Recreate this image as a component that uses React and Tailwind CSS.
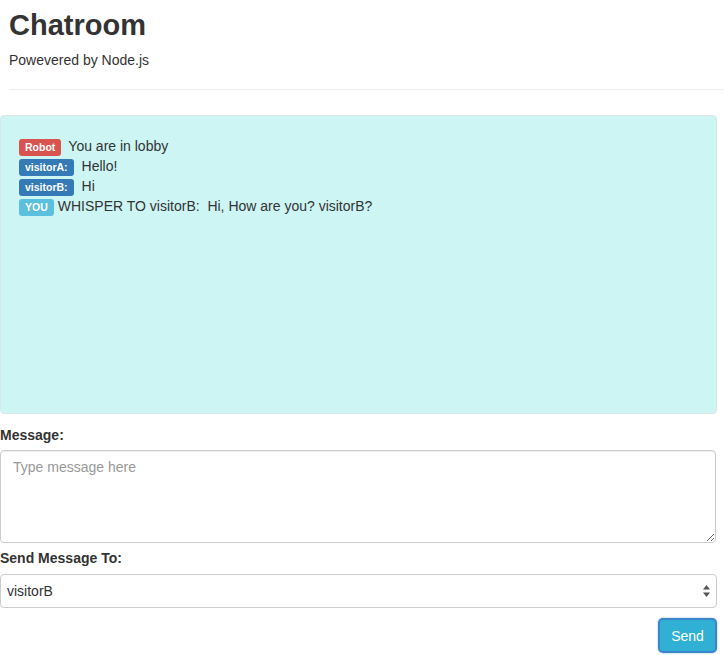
import React from 'react';

const labelColors = {
    danger: 'bg-[#d9534f]',
    primary: 'bg-[#337ab7]',
    info: 'bg-[#5bc0de]',
};

const messages = [
    { from: 'Robot', tone: 'danger', gap: 'ml-[7px]', text: 'You are in lobby' },
    { from: 'visitorA:', tone: 'primary', gap: 'ml-[8px]', text: 'Hello!' },
    { from: 'visitorB:', tone: 'primary', gap: 'ml-[8px]', text: 'Hi' },
    { from: 'YOU', tone: 'info', gap: 'ml-[4px]', text: 'WHISPER TO visitorB:\u00a0 Hi, How are you? visitorB?' },
];

const ChatLine = ({ msg }) => (
    <div className="leading-[20px]">
        <span className={`${labelColors[msg.tone]} text-white font-bold text-[10.5px] leading-none rounded-[3px] pt-[2px] pb-[3px] px-[6px]`}>
            {msg.from}
        </span>
        <span className={msg.gap}>{msg.text}</span>
    </div>
);

export default function App() {
    return (
        <div
            className="w-[724px] min-h-[655px] bg-white text-[#333] text-[14px] leading-[20px]"
            style={{ fontFamily: '"Liberation Sans", Arial, sans-serif' }}
        >
            {/* header */}
            <div className="pl-[9px]">
                <h1 className="pt-[7px] text-[29px] leading-[36px] font-bold">Chatroom</h1>
                <p className="mt-[7px]">Powevered by Node.js</p>
                <hr className="mt-[19px] border-0 border-t border-[#eee]" />
            </div>

            {/* chat log */}
            <div className="mt-[25px] w-[717px] h-[299px] rounded-[4px] border border-[#dde6e6] bg-[#ccf5f4] pt-[20px] pl-[18px]">
                {messages.map((m, i) => (
                    <ChatLine key={i} msg={m} />
                ))}
            </div>

            {/* form */}
            <div className="w-[717px]">
                <label className="block mt-[11px] font-bold">Message:</label>
                <textarea
                    placeholder="Type message here"
                    className="block mt-[5px] w-[716px] h-[93px] rounded-[4px] border border-[#ccc] px-[12px] py-[6px] leading-[20px] text-[14px] shadow-[inset_0_1px_1px_rgba(0,0,0,0.075)] placeholder:text-[#999] outline-none"
                />

                <label className="block mt-[5px] font-bold">Send Message To:</label>
                <div className="relative mt-[6px]">
                    <select
                        defaultValue="visitorB"
                        className="block w-[717px] h-[34px] appearance-none rounded-[4px] border border-[#ccc] bg-white pl-[6px] pr-[24px] text-[14px] text-[#333] outline-none"
                    >
                        <option value="visitorA">visitorA</option>
                        <option value="visitorB">visitorB</option>
                    </select>
                    <svg className="absolute right-[7px] top-[11px] pointer-events-none" width="7" height="12" viewBox="0 0 7 12">
                        <path d="M3.5 0 L7 4.5 L0 4.5 Z" fill="#555" />
                        <path d="M3.5 12 L7 7.5 L0 7.5 Z" fill="#555" />
                    </svg>
                </div>

                <div className="flex justify-end mt-[10px]">
                    <button className="w-[59px] h-[35px] rounded-[5px] border-2 border-[#3a86cc] bg-[#31b0d5] text-white text-[14px] shadow-[0_0_2px_rgba(59,130,200,0.6)]">
                        Send
                    </button>
                </div>
            </div>
        </div>
    );
}
